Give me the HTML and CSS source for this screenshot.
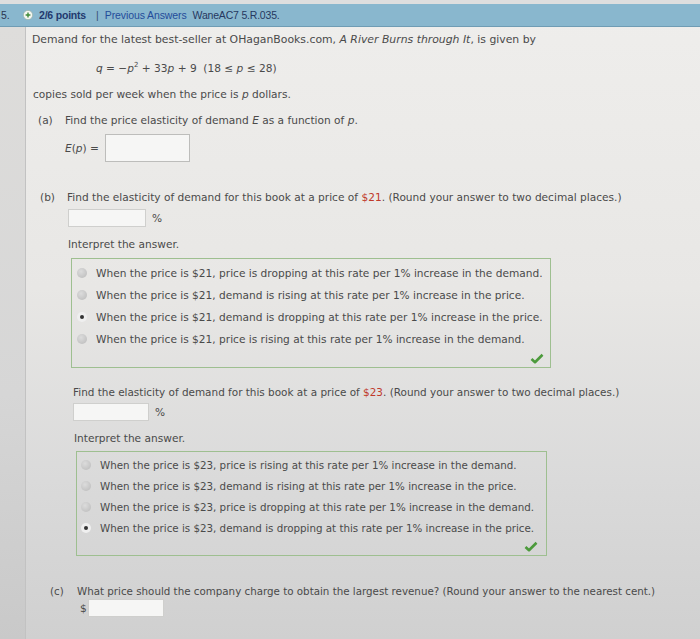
FILE: index.html
```html
<!DOCTYPE html>
<html>
<head>
<meta charset="utf-8">
<link rel="stylesheet" href="styles.css">
</head>
<body>
<div class="topstrip"></div>
<div class="header">
  <span class="qnum">5.</span>
  <span class="plus-icon"><svg width="10" height="10" viewBox="0 0 10 10"><circle cx="5" cy="5" r="4.6" fill="#f4f6f2" stroke="#9bb0a0" stroke-width="0.6"/><path d="M5 2.6v4.8M2.6 5h4.8" stroke="#3f8a3a" stroke-width="1.4"/></svg></span>
  <span class="points">2/6 points</span>
  <span class="sep">|</span>
  <span class="prev">Previous Answers</span>
  <span class="code">WaneAC7 5.R.035.</span>
</div>
<div class="page">
  <div class="gutter"></div>
  <div class="main">
    <p class="intro">Demand for the latest best-seller at OHaganBooks.com, <i>A River Burns through It</i>, is given by</p>
    <p class="eq"><i>q</i> = −<i>p</i><sup>2</sup> + 33<i>p</i> + 9&nbsp; (18 ≤ <i>p</i> ≤ 28)</p>
    <p class="copies">copies sold per week when the price is <i>p</i> dollars.</p>

    <p class="part part-a"><span class="lbl">(a)</span><span class="txt">Find the price elasticity of demand <i>E</i> as a function of <i>p</i>.</span></p>
    <div class="ep-row"><span class="ep"><i>E</i>(<i>p</i>) =</span><span class="box big"></span></div>

    <p class="part part-b"><span class="lbl">(b)</span><span class="txt">Find the elasticity of demand for this book at a price of <span class="red">$21</span>. (Round your answer to two decimal places.)</span></p>
    <div class="pct-row row-b"><span class="box small"></span><span class="pct">%</span></div>
    <p class="interp interp-b">Interpret the answer.</p>
    <div class="choices choices-b">
      <div class="opt"><span class="radio"></span><span class="txt">When the price is $21, price is dropping at this rate per 1% increase in the demand.</span></div>
      <div class="opt"><span class="radio"></span><span class="txt">When the price is $21, demand is rising at this rate per 1% increase in the price.</span></div>
      <div class="opt"><span class="radio on"></span><span class="txt">When the price is $21, demand is dropping at this rate per 1% increase in the price.</span></div>
      <div class="opt"><span class="radio"></span><span class="txt">When the price is $21, price is rising at this rate per 1% increase in the demand.</span></div>
      <svg class="check" width="14" height="11" viewBox="0 0 14 11"><path d="M1.5 6 L5 9.2 L12.5 1.8" fill="none" stroke="#4c9a3c" stroke-width="2.6" stroke-linejoin="round"/></svg>
    </div>

    <p class="part part-b2"><span class="txt">Find the elasticity of demand for this book at a price of <span class="red">$23</span>. (Round your answer to two decimal places.)</span></p>
    <div class="pct-row row-b2"><span class="box small"></span><span class="pct">%</span></div>
    <p class="interp interp-b2">Interpret the answer.</p>
    <div class="choices choices-b2">
      <div class="opt"><span class="radio"></span><span class="txt">When the price is $23, price is rising at this rate per 1% increase in the demand.</span></div>
      <div class="opt"><span class="radio"></span><span class="txt">When the price is $23, demand is rising at this rate per 1% increase in the price.</span></div>
      <div class="opt"><span class="radio"></span><span class="txt">When the price is $23, price is dropping at this rate per 1% increase in the demand.</span></div>
      <div class="opt"><span class="radio on"></span><span class="txt">When the price is $23, demand is dropping at this rate per 1% increase in the price.</span></div>
      <svg class="check" width="14" height="11" viewBox="0 0 14 11"><path d="M1.5 6 L5 9.2 L12.5 1.8" fill="none" stroke="#4c9a3c" stroke-width="2.6" stroke-linejoin="round"/></svg>
    </div>

    <p class="part part-c"><span class="lbl">(c)</span><span class="txt">What price should the company charge to obtain the largest revenue? (Round your answer to the nearest cent.)</span></p>
    <div class="dollar-row"><span class="dollar">$</span><span class="box small"></span></div>
  </div>
</div>
</body>
</html>
```
FILE: styles.css
```css
html, body {
  margin: 0;
  padding: 0;
}
body {
  width: 700px;
  height: 639px;
  overflow: hidden;
  font-family: "DejaVu Sans", Verdana, sans-serif;
  font-size: 10.6px;
  color: #4a4a4a;
  background: linear-gradient(180deg, #efeeec 0%, #e8e7e5 45%, #dadada 75%, #d0d0d0 100%);
}
p { margin: 0; line-height: 14px; white-space: nowrap; }
.topstrip {
  height: 4px;
  background: #dedede;
}
.header {
  height: 22px;
  background: #89b7ce;
  border-bottom: 1px solid #6f9cb4;
  display: flex;
  align-items: center;
  font-family: "Liberation Sans", Arial, sans-serif;
  font-size: 10.5px;
  color: #1f3566;
}
.qnum { width: 22px; margin-left: 1px; color: #2c3550; }
.plus-icon { display: flex; width: 10px; height: 10px; margin-right: 6px; }
.points { font-weight: bold; color: #22396f; letter-spacing: -0.2px; }
.sep { margin: 0 6px 0 10px; color: #3a5070; }
.prev { color: #244c9a; margin-right: 6px; letter-spacing: -0.1px; }
.code { color: #26385f; letter-spacing: -0.2px; }

.page {
  display: flex;
  height: 612px;
}
.gutter {
  width: 25px;
  border-right: 1px solid #c2c2c2;
  background: linear-gradient(180deg, #dedddb 0%, #d6d6d6 60%, #c9c9c9 100%);
}
.main {
  flex: 1;
  position: relative;
}
.intro { margin: 6px 0 0 6px; font-size: 10.85px; }
.eq { margin: 14px 0 0 70px; }
.eq sup { font-size: 7px; line-height: 0; vertical-align: 5px; }
.copies { margin: 12px 0 0 7px; }
.part { display: flex; }
.lbl { display: inline-block; width: 27px; }
.part-a { margin: 12px 0 0 12px; }
.ep-row { display: flex; align-items: center; margin: 7px 0 0 39px; }
.ep { width: 40px; }
.box {
  display: inline-block;
  background: #f6f6f5;
  border: 1px solid #cfcfcd;
  box-sizing: border-box;
}
.box.big { width: 85px; height: 28px; border-color: #bdbdbb; }
.box.small { width: 78px; height: 18px; }
.part-b { margin: 28px 0 0 14px; }
.pct-row { display: flex; align-items: center; }
.row-b { margin: 5px 0 0 42px; }
.pct { margin-left: 6px; }
.interp-b { margin: 10px 0 0 42px; }
.choices {
  position: relative;
  border: 1px solid #9ebf90;
  box-sizing: border-box;
}
.choices-b { margin: 7px 0 0 45px; width: 480px; height: 110px; padding-top: 3px; }
.opt {
  display: flex;
  align-items: center;
  height: 22px;
  white-space: nowrap;
}
.choices-b .opt { padding-left: 5px; }
.choices-b2 .opt { height: 21px; padding-left: 4px; font-size: 10.3px; }
.radio {
  width: 10px;
  height: 10px;
  border-radius: 50%;
  background: radial-gradient(circle at 40% 35%, #dcdcdc 0%, #c4c4c4 70%, #b8b8b8 100%);
  margin-right: 9px;
  flex: none;
  position: relative;
}
.radio.on {
  background: #efefef;
}
.radio.on::after {
  content: "";
  position: absolute;
  left: 3px;
  top: 3px;
  width: 4px;
  height: 4px;
  border-radius: 50%;
  background: #333;
}
.check { position: absolute; right: 6px; bottom: 3px; }
.part-b2 { margin: 17px 0 0 47px; font-size: 10.45px; }
.row-b2 { margin: 4px 0 0 47px; }
.row-b2 .box.small { width: 76px; }
.interp-b2 { margin: 10px 0 0 48px; }
.choices-b2 { margin: 6px 0 0 50px; width: 471px; height: 105px; padding-top: 2px; }
.choices-b2 .check { bottom: 3px; right: 8px; }
.part-c { margin: 28px 0 0 24px; font-size: 10.3px; }
.dollar-row { display: flex; align-items: center; margin: 1px 0 0 54px; }
.dollar { width: 8px; }
.dollar-row .box.small { width: 76px; }
.red { color: #c0392b; }
```
